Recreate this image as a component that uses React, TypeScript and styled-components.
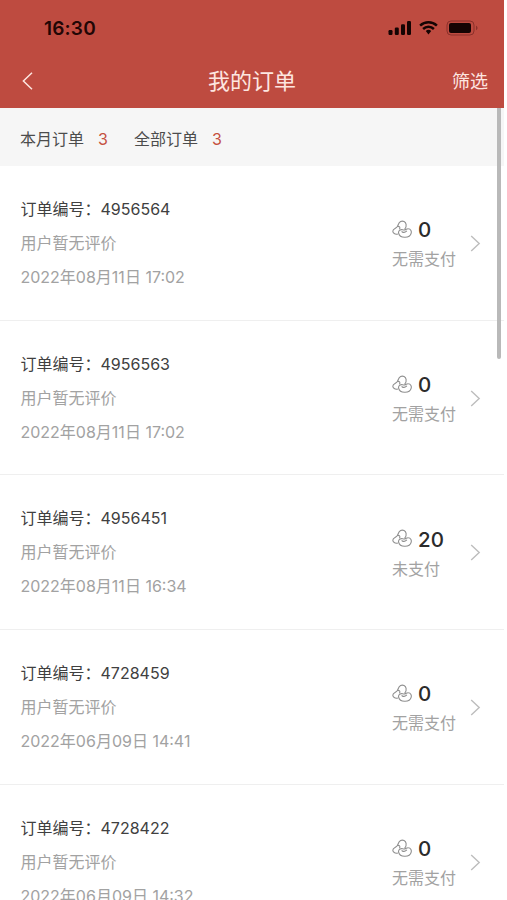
import React from "react";
import styled, { createGlobalStyle } from "styled-components";

const GlobalStyle = createGlobalStyle`
  * { box-sizing: border-box; }
  html, body { margin: 0; background: #fff; }
  body {
    height: 900px;
    overflow: hidden;
    font-family: Inter, "Noto Sans CJK SC", sans-serif;
    font-size: 16px;
  }
`;

const Screen = styled.main`
  position: relative;
  width: 504px;
  height: 900px;
  overflow: hidden;
  background: #fff;
`;

const Header = styled.header`
  height: 107.5px;
  background: #be4b40;
`;

const StatusBar = styled.div`
  display: flex;
  justify-content: space-between;
  align-items: center;
  height: 56px;
  padding: 0 26px 0 44px;
`;

const Clock = styled.span`
  font-size: 19px;
  font-weight: 600;
  letter-spacing: 0.2px;
  color: #210605;
`;

const StatusIcons = styled.svg`
  display: block;
  width: 90px;
  height: 16px;
`;

const NavBar = styled.div`
  display: grid;
  grid-template-columns: 80px 1fr 80px;
  align-items: center;
  height: 51px;
  padding: 0 16px 0 22px;
  color: #fde6e0;
`;

const BackIcon = styled.svg`
  display: block;
  width: 12px;
  height: 18px;
  margin-top: -2px;
`;

const Title = styled.h1`
  margin: -1px 0 0 -6px;
  font-size: 22px;
  font-weight: 400;
  line-height: 30px;
  text-align: center;
`;

const FilterLabel = styled.span`
  font-size: 18px;
  line-height: 28px;
  text-align: right;
`;

const Summary = styled.div`
  display: flex;
  align-items: center;
  gap: 26px;
  height: 58.5px;
  padding: 5px 20px 0;
  background: #f6f6f6;
  color: #4c4c4c;
`;

const SummaryItem = styled.div`
  display: flex;
  gap: 14px;
  line-height: 24px;
`;

const Count = styled.span`
  color: #c5503f;
`;

const Row = styled.article`
  display: flex;
  height: 154.7px;
  padding: 26px 23px 0 20.5px;
  border-bottom: 1px solid #efefef;
`;

const Details = styled.div`
  flex: 1;
`;

const Line = styled.div<{ $strong?: boolean }>`
  height: 34px;
  line-height: 34px;
  white-space: nowrap;
  color: ${(p) => (p.$strong ? "#404040" : "#a2a2a2")};
`;

const Payment = styled.div`
  width: 78px;
  padding-top: 22.4px;
`;

const Amount = styled.div`
  display: flex;
  align-items: center;
  gap: 6px;
  height: 31px;
  font-size: 20.5px;
  font-weight: 500;
  color: #2b2b2b;
`;

const PayStatus = styled.div`
  line-height: 28px;
  color: #a2a2a2;
`;

const BeanSvg = styled.svg`
  width: 20px;
  height: 20px;
`;

const RowChevron = styled.svg`
  width: 11px;
  height: 18px;
  margin-top: 42px;
`;

const ScrollThumb = styled.div`
  position: absolute;
  top: 107.5px;
  right: 3px;
  width: 4px;
  height: 251px;
  border-radius: 0 0 2px 2px;
  background: #b9b9b9;
`;

const ArrowCell = styled.div`
  display: flex;
  align-items: flex-start;
  width: 11px;
`;

const orders = [
  { id: "4956564", date: "2022年08月11日 17:02", amount: 0, status: "无需支付" },
  { id: "4956563", date: "2022年08月11日 17:02", amount: 0, status: "无需支付" },
  { id: "4956451", date: "2022年08月11日 16:34", amount: 20, status: "未支付" },
  { id: "4728459", date: "2022年06月09日 14:41", amount: 0, status: "无需支付" },
  { id: "4728422", date: "2022年06月09日 14:32", amount: 0, status: "无需支付" },
];

function Beans() {
  return (
    <BeanSvg viewBox="0 0 20 20" fill="none" stroke="#8f8f8f" strokeWidth="1.1" strokeLinecap="round">
      <path d="M5.4 14.1C3 14.6.9 13.2.8 11.2C.9 8.6 4.2 8.8 5.4 6.6C6.2 5 6.4 2.6 8.6 1.5C11 .5 13.6 1.8 14.1 4.3C14.4 5.9 13.9 7.5 12.9 8.9" />
      <path d="M8.2 9.9C10 9 11.1 10.4 12.9 9.9C14.3 9.5 14.7 8.5 16.4 8.7C18.5 8.9 19.7 11 19.2 13.1C18.5 16 15.7 17.4 12.6 17.3C9.5 17.2 7.1 15.5 6.6 13.1C6.3 11.6 6.9 10.5 8.2 9.9Z" />
      <path d="M5.6 6.4C7.6 6.2 8.4 7.4 7.6 9" />
      <path d="M10 11.7C11.2 12.6 13.3 12.4 14.6 11.2" />
    </BeanSvg>
  );
}

export default function App() {
  return (
    <>
      <GlobalStyle />
      <Screen>
        <Header>
          <StatusBar>
            <Clock>16:30</Clock>
            <StatusIcons viewBox="0 0 90 16">
              <g fill="#150403">
                <rect x="0.5" y="10" width="4" height="5" rx="1.2" />
                <rect x="6.8" y="7.5" width="4" height="7.5" rx="1.2" />
                <rect x="13" y="4.3" width="4" height="10.7" rx="1.2" />
                <rect x="19" y="1" width="4" height="14" rx="1.2" />
                <path d="M37.8 11.1a3.9 3.9 0 0 1 5.4 0L40.5 14.4Z" />
                <rect x="61" y="3" width="22" height="10" rx="2" />
              </g>
              <g fill="none" stroke="#150403" strokeWidth="2.5">
                <path d="M32.1 5.6a12.2 12.2 0 0 1 16.8 0" />
                <path d="M35.1 9a7.8 7.8 0 0 1 10.8 0" />
              </g>
              <rect x="59" y="1" width="27" height="14" rx="4" fill="none" stroke="#8b302a" />
              <path d="M88 5.8c2 .7 2 3.7 0 4.4Z" fill="#8b302a" />
            </StatusIcons>
          </StatusBar>
          <NavBar>
            <BackIcon viewBox="0 0 12 18" fill="none" stroke="currentColor" strokeWidth="1.5">
              <path d="M10 .8L1.4 9L10 17.2" />
            </BackIcon>
            <Title>我的订单</Title>
            <FilterLabel>筛选</FilterLabel>
          </NavBar>
        </Header>
        <Summary>
          <SummaryItem>
            本月订单<Count>3</Count>
          </SummaryItem>
          <SummaryItem>
            全部订单<Count>3</Count>
          </SummaryItem>
        </Summary>
        {orders.map((order) => (
          <Row key={order.id}>
            <Details>
              <Line $strong>订单编号：{order.id}</Line>
              <Line>用户暂无评价</Line>
              <Line>{order.date}</Line>
            </Details>
            <Payment>
              <Amount>
                <Beans />
                {order.amount}
              </Amount>
              <PayStatus>{order.status}</PayStatus>
            </Payment>
            <ArrowCell>
              <RowChevron viewBox="0 0 11 18" fill="none" stroke="#bdbdbd" strokeWidth="1.4">
                <path d="M1.2 2L9.2 9.5L1.2 17" />
              </RowChevron>
            </ArrowCell>
          </Row>
        ))}
        <ScrollThumb />
      </Screen>
    </>
  );
}
